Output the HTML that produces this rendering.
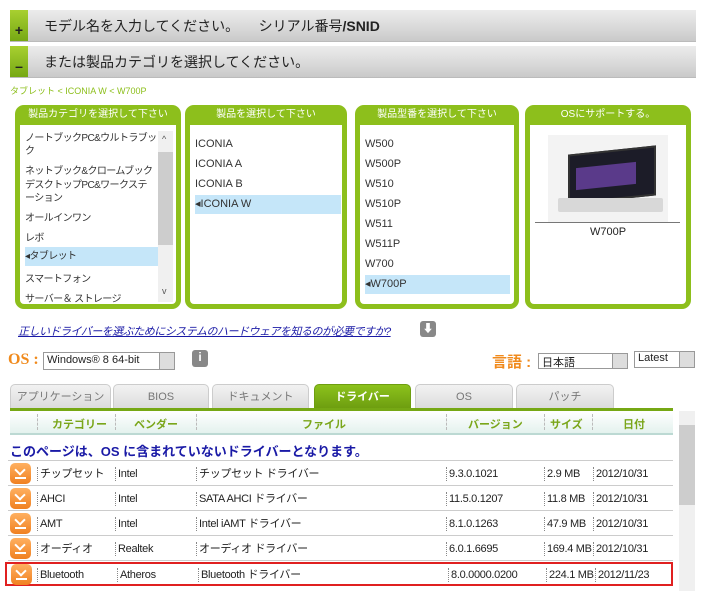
<!DOCTYPE html>
<html><head><meta charset="utf-8"><style>
*{box-sizing:border-box;margin:0;padding:0}
body{width:706px;height:599px;background:#fff;font-family:"Liberation Sans","Noto Sans CJK JP",sans-serif;position:relative;overflow:hidden;color:#222}
.a{position:absolute}
.bar{left:10px;width:686px;height:32px;background:linear-gradient(#ececec,#d8d8d8 60%,#c9c9c9);border-bottom:1px solid #bbb}
.bar .g{position:absolute;left:0;top:0;width:18px;height:100%;background:linear-gradient(#a8d030,#76a814);color:#222;font-weight:bold;font-size:14px;text-align:center;padding-top:12px}
.bar .t{position:absolute;left:34px;top:6px;font-size:14px;color:#222}
.pn{border:5px solid #8dbf1c;border-radius:9px;background:#fff;top:105px;height:204px}
.ph{background:#8dbf1c;color:#fff;font-size:10px;text-align:center;height:16px;line-height:12px;margin:-1px -1px 0}
.it{position:absolute;font-size:11px;color:#333;left:5px;white-space:nowrap}
.p1 .it{font-size:10px;letter-spacing:-0.6px}
.sel{background:#c5e6f9}
.tab{top:384px;height:24px;border:1px solid #ccc;border-bottom:none;border-radius:5px 5px 0 0;background:linear-gradient(#f2f2f2,#dcdcdc);font-size:11px;color:#777;text-align:center;line-height:24px}
.hd{font-size:11px;color:#7aa61a;font-weight:bold}
.sep{border-left:1px dashed #bbb}
.row{left:8px;width:665px;height:25px;border-bottom:1px solid #ccc;font-size:11px}
.row span{position:absolute;top:6px;border-left:1px dotted #888;padding-left:2px;height:14px;line-height:14px;white-space:nowrap;letter-spacing:-0.3px}
.ic{position:absolute;left:2px;top:2px;width:21px;height:21px;border-radius:5px;background:linear-gradient(#ffb060,#f08020)}
.ic:before{content:"";position:absolute;left:6px;top:3px;width:6px;height:6px;border:solid #fff;border-width:0 2px 2px 0;transform:rotate(45deg)}
.ic:after{content:"";position:absolute;left:5px;top:14px;width:11px;height:2px;background:#fff}
</style></head><body>
<div class="a bar" style="top:10px"><div class="g">+</div><div class="t">モデル名を入力してください。&nbsp;&nbsp;&nbsp;&nbsp;&nbsp;シリアル番号<b>/SNID</b></div></div>
<div class="a bar" style="top:46px"><div class="g">–</div><div class="t">または製品カテゴリを選択してください。</div></div>
<div class="a" style="left:10px;top:84px;font-size:9px;color:#8dbf1c">タブレット &lt; ICONIA W &lt; W700P</div>

<div class="a pn p1" style="left:15px;width:166px"><div class="ph">製品カテゴリを選択して下さい</div>
<div class="it" style="top:22px;line-height:13px">ノートブックPC&amp;ウルトラブッ<br>ク</div>
<div class="it" style="top:52px">ネットブック&amp;クロームブック</div>
<div class="it" style="top:69px;line-height:13px">デスクトップPC&amp;ワークステ<br>ーション</div>
<div class="it" style="top:99px">オールインワン</div>
<div class="it" style="top:119px">レボ</div>
<div class="it sel" style="top:137px;width:133px;height:19px;line-height:19px;left:5px">◂タブレット</div>
<div class="it" style="top:160px">スマートフォン</div>
<div class="it" style="top:180px">サーバー＆ ストレージ</div>
<div class="a" style="left:138px;top:21px;width:15px;height:171px;background:#f0f0f0"></div>
<div class="a" style="left:138px;top:42px;width:15px;height:93px;background:#cdcdcd"></div>
<div class="a" style="left:142px;top:24px;font-size:9px;color:#555">^</div>
<div class="a" style="left:142px;top:176px;font-size:9px;color:#555">v</div>
</div>
<div class="a pn" style="left:185px;width:162px"><div class="ph">製品を選択して下さい</div>
<div class="it" style="top:28px">ICONIA</div><div class="it" style="top:48px">ICONIA A</div><div class="it" style="top:68px">ICONIA B</div>
<div class="it sel" style="top:85px;width:146px;height:19px;line-height:19px">◂ICONIA W</div></div>
<div class="a pn" style="left:355px;width:164px"><div class="ph">製品型番を選択して下さい</div>
<div class="it" style="top:28px">W500</div><div class="it" style="top:48px">W500P</div><div class="it" style="top:68px">W510</div><div class="it" style="top:88px">W510P</div><div class="it" style="top:108px">W511</div><div class="it" style="top:128px">W511P</div><div class="it" style="top:148px">W700</div>
<div class="it sel" style="top:165px;width:145px;height:19px;line-height:19px">◂W700P</div></div>
<div class="a pn" style="left:525px;width:166px"><div class="ph">OSにサポートする。</div>
<div class="a" style="left:18px;top:25px;width:120px;height:87px;background:#f3f3f3"></div>
<div class="a" style="left:38px;top:40px;width:88px;height:50px;background:#1c1c28;transform:skewY(-6deg);border:2px solid #333"></div>
<div class="a" style="left:46px;top:55px;width:60px;height:22px;background:#5a3a8a;transform:skewY(-6deg)"></div>
<div class="a" style="left:28px;top:88px;width:105px;height:14px;background:#d8d8d8;border-radius:2px"></div>
<div class="a" style="left:5px;top:112px;width:145px;border-top:1px solid #777"></div>
<div class="a" style="left:0;width:156px;top:116px;text-align:center;font-size:11px">W700P</div></div>

<div class="a" style="left:18px;top:323px;font-size:11px;letter-spacing:-0.5px;color:#1a1aa6;text-decoration:underline;font-style:italic;white-space:nowrap">正しいドライバーを選ぶためにシステムのハードウェアを知るのが必要ですか?</div>
<div class="a" style="left:420px;top:321px;width:16px;height:16px;background:#888;border-radius:3px;color:#fff;font-size:11px;text-align:center;line-height:16px">⬇</div>

<div class="a" style="left:8px;top:351px;font-size:16px;font-weight:bold;color:#f08a1c;font-family:'Liberation Serif',serif">OS :</div>
<div class="a" style="left:43px;top:352px;width:132px;height:18px;border:1px solid #999;font-size:11px;padding:1px 3px">Windows® 8 64-bit<span style="position:absolute;right:0;top:0;width:15px;height:16px;background:#ddd;border-left:1px solid #999"></span></div>
<div class="a" style="left:192px;top:350px;width:16px;height:17px;background:#888;border-radius:3px;color:#fff;font-size:12px;text-align:center;font-weight:bold">i</div>
<div class="a" style="left:492px;top:351px;font-size:15px;color:#f08a1c;font-weight:bold">言語 :</div>
<div class="a" style="left:538px;top:353px;width:90px;height:16px;border:1px solid #999;font-size:11px;padding:0 3px">日本語<span style="position:absolute;right:0;top:0;width:15px;height:14px;background:#ddd;border-left:1px solid #999"></span></div>
<div class="a" style="left:634px;top:351px;width:61px;height:17px;border:1px solid #999;font-size:11px;padding:0 3px">Latest<span style="position:absolute;right:0;top:0;width:15px;height:15px;background:#ddd;border-left:1px solid #999"></span></div>

<div class="a tab" style="left:10px;width:101px">アプリケーション</div>
<div class="a tab" style="left:113px;width:96px">BIOS</div>
<div class="a tab" style="left:212px;width:97px">ドキュメント</div>
<div class="a tab" style="left:314px;width:97px;background:linear-gradient(#8cc21c,#6e9e10);color:#fff;font-weight:bold;border-color:#6e9e10">ドライバー</div>
<div class="a tab" style="left:415px;width:98px">OS</div>
<div class="a tab" style="left:516px;width:98px">パッチ</div>
<div class="a" style="left:10px;top:408px;width:663px;height:3px;background:#76a814"></div>
<div class="a" style="left:10px;top:411px;width:663px;height:24px;background:linear-gradient(#fff,#e4f2ee);border-bottom:2px solid #bcd9d3"></div>
<div class="a hd" style="left:52px;top:416px">カテゴリー</div>
<div class="a hd" style="left:134px;top:416px">ベンダー</div>
<div class="a hd" style="left:302px;top:416px">ファイル</div>
<div class="a hd" style="left:468px;top:416px">バージョン</div>
<div class="a hd" style="left:550px;top:416px">サイズ</div>
<div class="a hd" style="left:623px;top:416px">日付</div>
<div class="a sep" style="left:37px;top:414px;height:16px"></div><div class="a sep" style="left:115px;top:414px;height:16px"></div><div class="a sep" style="left:196px;top:414px;height:16px"></div><div class="a sep" style="left:446px;top:414px;height:16px"></div><div class="a sep" style="left:544px;top:414px;height:16px"></div><div class="a sep" style="left:592px;top:414px;height:16px"></div>
<div class="a" style="left:10px;top:441px;font-size:13px;font-weight:bold;color:#1a1aa6">このページは、OS に含まれていないドライバーとなります。</div>
<div class="a" style="left:8px;top:460px;width:665px;border-top:1px solid #ccc"></div>

<div class="a row" style="top:461px"><div class="ic"></div><span style="left:29px">チップセット</span><span style="left:107px">Intel</span><span style="left:188px">チップセット ドライバー</span><span style="left:438px">9.3.0.1021</span><span style="left:536px">2.9 MB</span><span style="left:585px">2012/10/31</span></div>
<div class="a row" style="top:486px"><div class="ic"></div><span style="left:29px">AHCI</span><span style="left:107px">Intel</span><span style="left:188px">SATA AHCI ドライバー</span><span style="left:438px">11.5.0.1207</span><span style="left:536px">11.8 MB</span><span style="left:585px">2012/10/31</span></div>
<div class="a row" style="top:511px"><div class="ic"></div><span style="left:29px">AMT</span><span style="left:107px">Intel</span><span style="left:188px">Intel iAMT ドライバー</span><span style="left:438px">8.1.0.1263</span><span style="left:536px">47.9 MB</span><span style="left:585px">2012/10/31</span></div>
<div class="a row" style="top:536px"><div class="ic"></div><span style="left:29px">オーディオ</span><span style="left:107px">Realtek</span><span style="left:188px">オーディオ ドライバー</span><span style="left:438px">6.0.1.6695</span><span style="left:536px">169.4 MB</span><span style="left:585px">2012/10/31</span></div>
<div class="a row" style="top:562px;left:5px;width:668px;border:2px solid #e02020;height:24px"><div class="ic" style="left:4px;top:0"></div><span style="left:30px;top:4px">Bluetooth</span><span style="left:110px;top:4px">Atheros</span><span style="left:191px;top:4px">Bluetooth ドライバー</span><span style="left:441px;top:4px">8.0.0000.0200</span><span style="left:539px;top:4px">224.1 MB</span><span style="left:588px;top:4px">2012/11/23</span></div>
<div class="a" style="left:679px;top:411px;width:16px;height:180px;background:#f0f0f0"></div>
<div class="a" style="left:679px;top:425px;width:16px;height:80px;background:#cdcdcd"></div>
</body></html>
